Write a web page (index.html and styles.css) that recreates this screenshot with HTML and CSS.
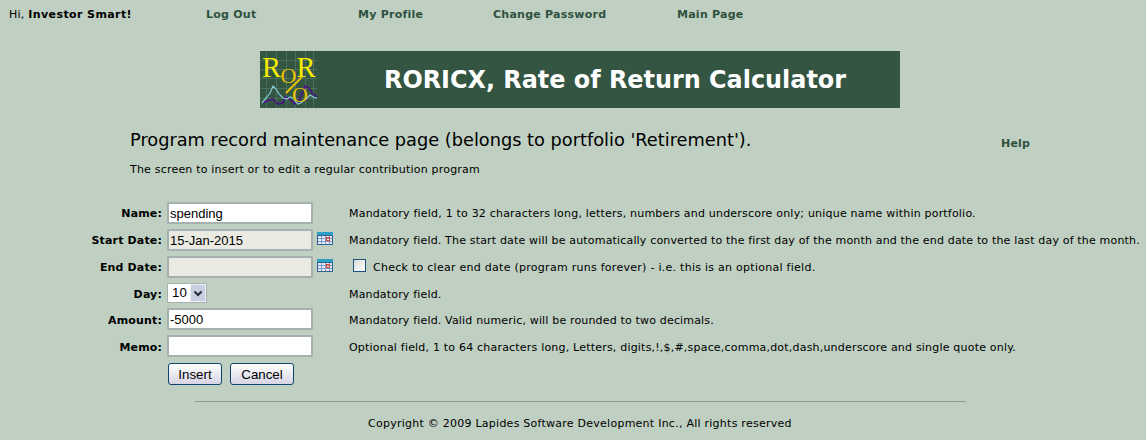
FILE: index.html
```html
<!DOCTYPE html>
<html lang="en">
<head>
<meta charset="utf-8">
<title>RORICX</title>
<link rel="stylesheet" href="styles.css">
</head>
<body>
<nav class="topnav">
  <span class="greet">Hi, <b>Investor Smart!</b></span>
  <a class="l1" href="#">Log Out</a>
  <a class="l2" href="#">My Profile</a>
  <a class="l3" href="#">Change Password</a>
  <a class="l4" href="#">Main Page</a>
</nav>
<header class="banner">
  <svg class="logo" width="57" height="57" viewBox="0 0 57 57">
    <rect width="57" height="57" fill="#335542"/>
    <path d="M6.500 0V57M16.500 0V57M26.500 0V57M35.500 0V57M45.500 0V57M53.500 0V57M0 9.500H57M0 18.500H57M0 27.500H57M0 37.500H57M0 47.500H57" fill="none" stroke="#4a6f5b" stroke-width="1"/>
    <path d="M3 52L9 49L13 48L17 53L23 52L25 46L30 48L35 53L39 50L45 35L49 37L52 42L57 46" fill="none" stroke="#4b0f86" stroke-width="1.500"/>
    <path d="M2 52L7 46L10 42L13 35L16 38L19 43L23 47L27 48L30 46L33 47L36 51L38 53L41 52L44 49L47 47L50 44L53 46L57 47" fill="none" stroke="#86cbd8" stroke-width="1.200"/>
    <text x="2" y="25.500" class="lr">R</text>
    <text x="36.500" y="25.500" class="lr">R</text>
    <text x="20.500" y="32" class="lo">O</text>
    <path d="M42 26L26 42" stroke="#e9c000" stroke-width="2"/>
    <text x="32" y="51" class="lo">O</text>
  </svg>
  <h1 class="title">RORICX, Rate of Return Calculator</h1>
</header>
<main class="content">
  <div class="headrow">
    <h2 class="pagehead">Program record maintenance page (belongs to portfolio 'Retirement').</h2>
    <a class="help" href="#">Help</a>
  </div>
  <p class="sub">The screen to insert or to edit a regular contribution program</p>
  <form class="form">
    <label class="lab">Name:</label>
    <div class="ctl"><input class="inp" type="text" value="spending"></div>
    <div class="note wide">Mandatory field, 1 to 32 characters long, letters, numbers and underscore only; unique name within portfolio.</div>

    <label class="lab">Start Date:</label>
    <div class="ctl"><input class="inp ro" type="text" value="15-Jan-2015"><svg class="cal" width="16" height="13" viewBox="0 0 16 13"><use href="#calicon"/></svg></div>
    <div class="note">Mandatory field. The start date will be automatically converted to the first day of the month and the end date to the last day of the month.</div>

    <label class="lab">End Date:</label>
    <div class="ctl"><input class="inp ro" type="text" value=""><svg class="cal" width="16" height="13" viewBox="0 0 16 13"><use href="#calicon"/></svg></div>
    <div class="note check"><span class="box"></span>Check to clear end date (program runs forever) - i.e. this is an optional field.</div>

    <label class="lab">Day:</label>
    <div class="ctl"><span class="sel"><span class="selv">10</span><span class="sela"><svg width="10" height="7" viewBox="0 0 10 7"><path d="M1.500 1.500L5 5L8.500 1.500" fill="none" stroke="#2a2a3a" stroke-width="2"/></svg></span></span></div>
    <div class="note">Mandatory field.</div>

    <label class="lab low">Amount:</label>
    <div class="ctl"><input class="inp" type="text" value="-5000"></div>
    <div class="note low">Mandatory field. Valid numeric, will be rounded to two decimals.</div>

    <label class="lab low">Memo:</label>
    <div class="ctl"><input class="inp" type="text" value=""></div>
    <div class="note wide low">Optional field, 1 to 64 characters long, Letters, digits,!,$,#,space,comma,dot,dash,underscore and single quote only.</div>

    <div></div>
    <div class="btns"><button class="btn b1" type="button">Insert</button><button class="btn b2" type="button">Cancel</button></div>
  </form>
</main>
<hr class="rule">
<footer class="copy">Copyright © 2009 Lapides Software Development Inc., All rights reserved</footer>
<svg class="defs" width="0" height="0">
  <defs>
    <g id="calicon">
      <rect x="0" y="0" width="16" height="13" fill="#34628f"/>
      <rect x="0" y="0" width="16" height="3" fill="#2aa0c4"/>
      <rect x="1" y="4" width="14" height="8" fill="#e6ecf6"/>
      <path d="M4.500 4V12M8.500 4V12M12.500 4V12M1 6.500H15M1 9.500H15" stroke="#8098c8" stroke-width="1"/>
      <rect x="9.500" y="5.500" width="3" height="3" fill="none" stroke="#e0442a" stroke-width="1"/>
    </g>
  </defs>
</svg>
</body>
</html>
```
FILE: styles.css
```css
* { box-sizing: border-box; }
html, body { margin: 0; padding: 0; }
body {
  width: 1146px;
  height: 440px;
  overflow: hidden;
  background: #bfcfc1;
  color: #000;
  font-family: "DejaVu Sans", Verdana, sans-serif;
  font-size: 11px;
}
.topnav {
  display: flex;
  height: 28px;
  padding: 8px 0 0 9px;
  line-height: 14px;
  letter-spacing: 0.25px;
}
.greet { width: 197px; }
.greet b { font-weight: 700; letter-spacing: 0.4px; }
.topnav a { color: #2f5240; font-weight: 700; text-decoration: none; }
.l1 { width: 152px; }
.l2 { width: 135px; }
.l3 { width: 184px; }
.banner {
  display: flex;
  align-items: center;
  width: 640px;
  height: 57px;
  margin: 23px 0 0 260px;
  background: #335542;
}
.logo { display: block; flex: none; }
.lr { font: 28.500px "Liberation Serif", serif; fill: #f5ec00; }
.lo { font: 22px "Liberation Serif", serif; fill: #e9c000; }
.title {
  margin: 0 0 0 67px;
  color: #fff;
  font-size: 23.900px;
  font-weight: 700;
  white-space: nowrap;
}
.headrow {
  display: flex;
  align-items: baseline;
  padding: 21px 0 0 130px;
}
.pagehead {
  width: 871px;
  margin: 0;
  font-size: 17.750px;
  font-weight: 400;
  line-height: 22px;
  white-space: nowrap;
}
.help { color: #2f5240; font-weight: 700; text-decoration: none; letter-spacing: 0.2px; position: relative; top: 1px; }
.sub { margin: 11px 0 0 130px; line-height: 16px; letter-spacing: 0.2px; }
.form {
  display: grid;
  grid-template-columns: 162px 187px 1fr;
  grid-template-rows: 22px 22px 22px 20px 22px 22px 23px;
  row-gap: 5px;
  margin-top: 24px;
  white-space: nowrap;
}
.lab { text-align: right; font-weight: 700; line-height: 24px; letter-spacing: 0.15px; }
.ctl { display: flex; align-items: center; padding-left: 5px; }
.inp {
  width: 146px;
  height: 22px;
  padding: 0 1px;
  border: 2px solid #a6b0ae;
  border-radius: 1px;
  background: #fff;
  color: #000;
  font-family: "Liberation Sans", Arial, sans-serif;
  font-size: 13px;
  outline: none;
}
.ro { background: #eaeae3; }
.cal { flex: none; margin: -3px 0 0 4px; }
.note { line-height: 24px; letter-spacing: 0.17px; }
.wide { letter-spacing: 0.2px; }
.low { line-height: 26px; }
.check { display: flex; align-items: flex-start; padding-left: 4px; letter-spacing: 0.27px; }
.box {
  flex: none;
  width: 13px;
  height: 13px;
  margin: 3px 7px 0 0;
  border: 1px solid #1c5180;
  background: linear-gradient(135deg, #dcdcd7, #fff);
}
.sel {
  display: flex;
  width: 40px;
  height: 20px;
  border: 1px solid #a6b0ae;
  background: #fff;
}
.selv {
  flex: 1;
  padding-left: 4px;
  font: 13.300px/18px "Liberation Sans", Arial, sans-serif;
}
.sela {
  display: flex;
  width: 16px;
  align-items: center;
  justify-content: center;
  background: #c8cfe0;
  border: 1px solid #eef0f6;
}
.btns {
  grid-column: 2 / 3;
  display: flex;
  align-items: flex-start;
  gap: 8px;
  padding: 1px 0 0 6px;
}
.btn {
  flex: none;
  height: 22px;
  padding: 0;
  border: 1px solid #0f4470;
  border-radius: 3px;
  background: linear-gradient(#ffffff, #d6d3e4);
  color: #000;
  font-family: "Liberation Sans", Arial, sans-serif;
  font-size: 13.300px;
}
.b1 { width: 54px; }
.b2 { width: 64px; }
.rule {
  width: 771px;
  height: 1px;
  margin: 16px 0 0 195px;
  border: 0;
  background: #8f9d92;
}
.copy { margin-top: 14px; padding-left: 368px; line-height: 16px; letter-spacing: 0.25px; }
.defs { position: absolute; }
```
